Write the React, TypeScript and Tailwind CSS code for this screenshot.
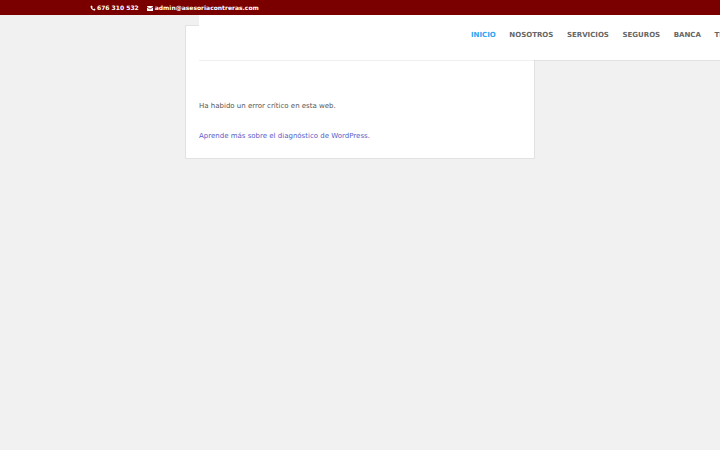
import React from 'react';

const font = "font-['DejaVu_Sans',sans-serif] [text-rendering:geometricPrecision]";

const menu = ['NOSOTROS', 'SERVICIOS', 'SEGUROS', 'BANCA', 'TELEFONIA'];

const App: React.FC = () => {
  return (
    <div className={`${font} relative w-[720px] h-[450px] overflow-hidden bg-[#f1f1f1]`}>
      {/* top bar */}
      <div className="relative z-20 h-[15px] pt-[1px] bg-[#7a0000] flex items-center pl-[90px] gap-[8px] text-white text-[6px] font-bold">
        <span className="flex items-center gap-[1px]">
          <svg width="6" height="6" viewBox="0 0 24 24" fill="currentColor">
            <path d="M6.600 2 3 4c-1 1-1 3 0 6 2 5 6 9 11 11 3 1 5 1 6 0l2-3.600-5-3.400-2.500 2.500c-2.500-1-5-3.500-6-6L11 8z" />
          </svg>
          676 310 532
        </span>
        <span className="flex items-center gap-[2px]">
          <svg width="6" height="5" viewBox="0 0 24 20" fill="currentColor">
            <path d="M0 2.500C0 1 1 0 2.500 0h19C23 0 24 1 24 2.500v.5l-12 8-12-8zM0 6l12 8 12-8v11.500c0 1.500-1 2.500-2.500 2.500h-19C1 20 0 19 0 17.500z" />
          </svg>
          admin@asesoriacontreras.com
        </span>
      </div>

      {/* header over the card */}
      <header className="absolute z-10 top-[15px] left-[199px] right-0 h-[45px] pb-[4px] bg-white shadow-[0_1px_0_rgba(0,0,0,0.06)] flex items-center gap-[13.6px] pl-[272px] whitespace-nowrap text-[7px] font-bold text-[#666666]">
        <span className="text-[#2ea3f2]">INICIO</span>
        {menu.map((item) => (
          <span key={item}>{item}</span>
        ))}
      </header>

      {/* wp error card */}
      <div className="ml-[185px] mt-[10px] w-[350px] h-[134px] bg-white border border-[#e2e2e2] pt-[74px] pl-[13px] text-[7px] text-[#555555]">
        <p className="leading-[12px]">Ha habido un error crítico en esta web.</p>
        <p className="leading-[12px] mt-[18px] text-[#5560c8]">Aprende más sobre el diagnóstico de WordPress.</p>
      </div>
    </div>
  );
};

export default App;
